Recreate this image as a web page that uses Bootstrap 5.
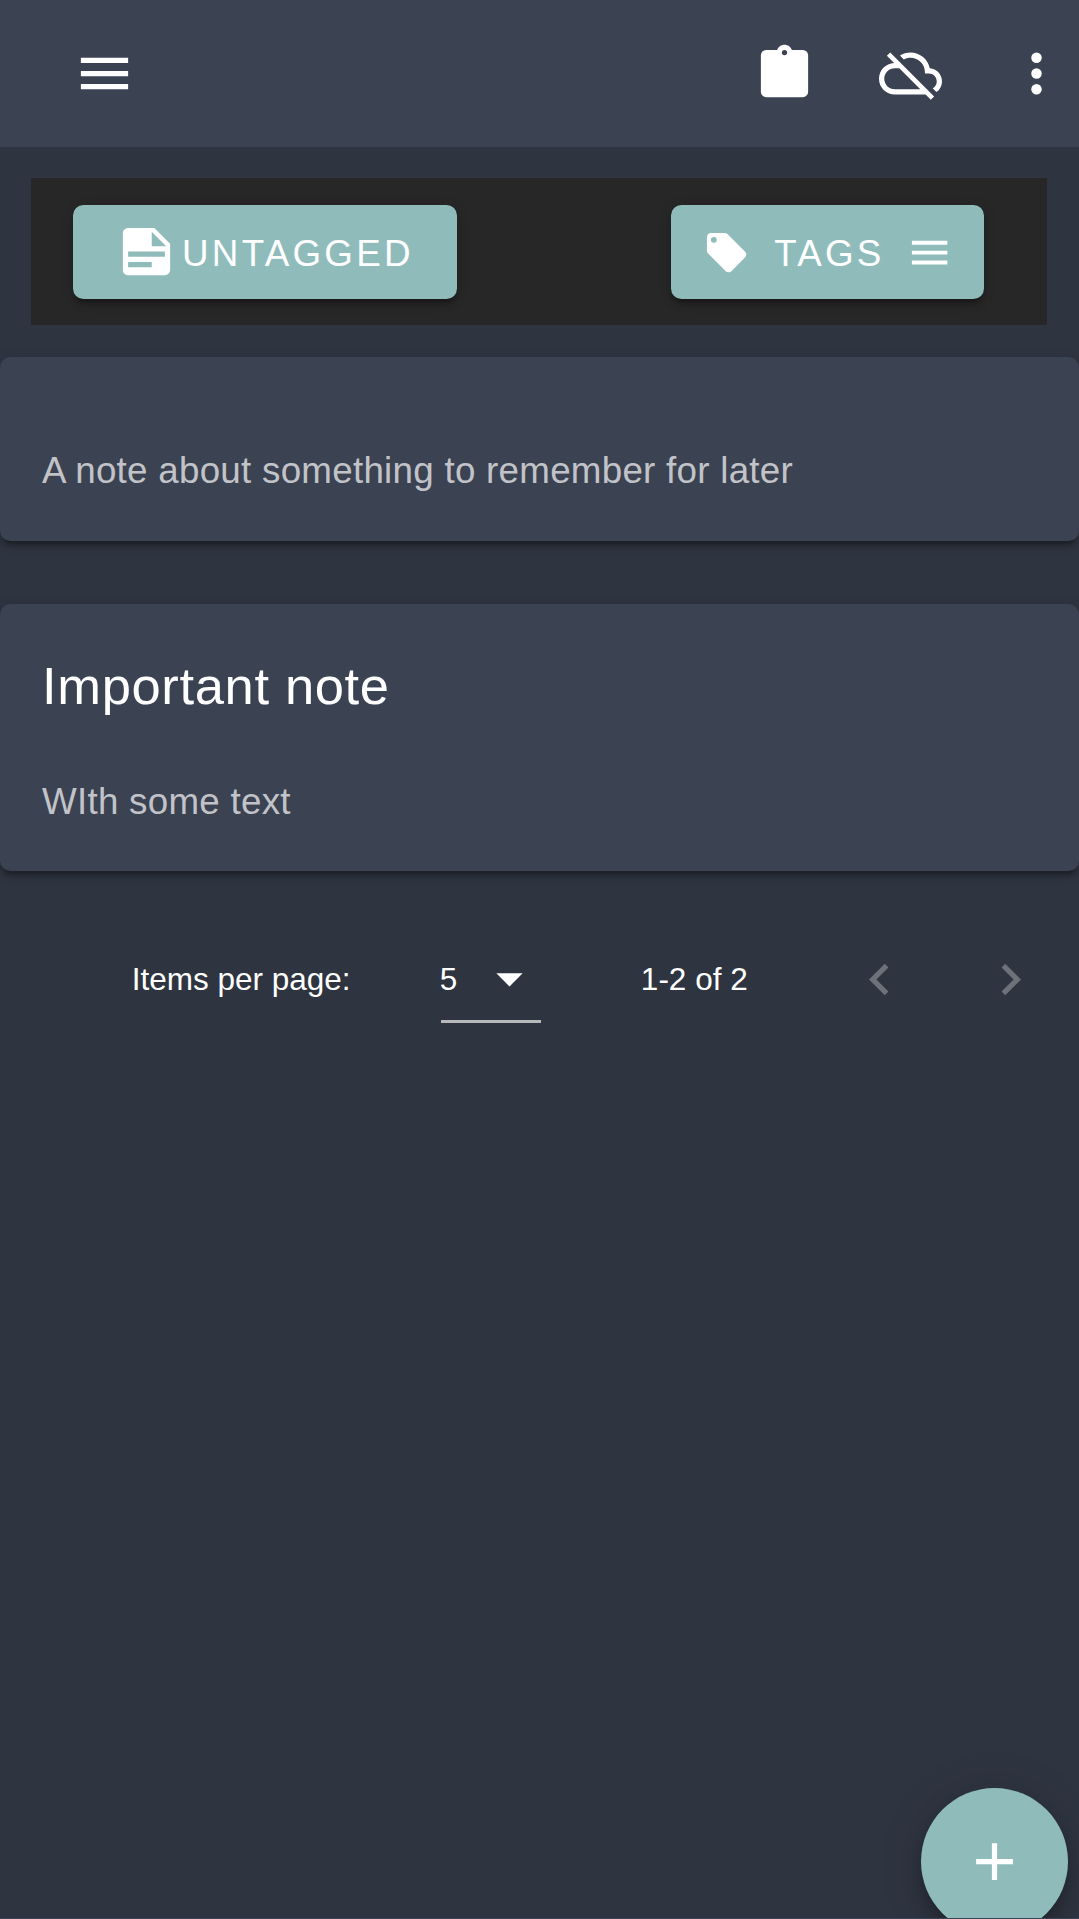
<!DOCTYPE html>
<html lang="en">
<head>
<meta charset="utf-8">
<meta name="viewport" content="width=device-width, initial-scale=1">
<title>Notes</title>
<link href="https://cdn.jsdelivr.net/npm/bootstrap@5.3.0/dist/css/bootstrap.min.css" rel="stylesheet">
<style>
:root { --u: 2.625px; --night: #2e3440; --surface: #3b4252; --accent: #8fbcbb; }
html, body { height: 100%; overflow: hidden; }
body { background: var(--night); color: #fff; font-family: "Liberation Sans", Arial, sans-serif; line-height: 1.5; }
svg { display: block; fill: currentColor; flex: none; }
.ic { width: calc(24 * var(--u)); height: calc(24 * var(--u)); }
.ic-sm { width: calc(18 * var(--u)); height: calc(18 * var(--u)); }
.icon-btn { color: inherit; background: none; border: 0; padding: 0; }
.app-bar { height: calc(56 * var(--u)); background: var(--surface); padding: 0 10.6px 0 73.4px; }
.app-actions { gap: 63px; }
.filter-bar { height: calc(56 * var(--u)); margin: 31.4px 31.6px 0 31.4px; background: #272727; padding: 0 63px 0 42px; }
.btn-accent { --bs-btn-color: #fff; --bs-btn-bg: var(--accent); --bs-btn-hover-bg: #83b1b0; --bs-btn-hover-color: #fff;
  height: calc(36 * var(--u)); padding: 0 42px; border: 0; border-radius: 10.5px; font-size: 36.75px; line-height: 1;
  letter-spacing: .0892857em;
  box-shadow: 0 7.9px 2.6px -5.25px rgba(0,0,0,.2), 0 5.25px 5.25px 0 rgba(0,0,0,.14), 0 2.6px 13px 0 rgba(0,0,0,.12); }
.btn-accent span { padding-top: 4px; }
.btn-untagged span { margin-left: 3.6px; margin-right: 1px; }
.btn-untagged svg { margin-bottom: 1px; }
.ic-start { margin-left: -10.5px; margin-right: 24px; margin-top: 1px; }
.ic-end { margin-right: -10.5px; margin-left: 21px; margin-top: 1px; }
.note-list { padding-top: 31.6px; gap: 63px; }
.note { --bs-card-bg: var(--surface); --bs-card-border-width: 0; --bs-card-border-radius: 10.5px; color: #fff; padding: 42px;
  box-shadow: 0 7.9px 2.6px -5.25px rgba(0,0,0,.2), 0 5.25px 5.25px 0 rgba(0,0,0,.14), 0 2.6px 13px 0 rgba(0,0,0,.12); }
.note-title { font-size: 52.5px; line-height: 80px; letter-spacing: .0125em; font-weight: 400; margin: 0 0 46px; }
.note-title:empty { margin: 0; height: 42px; }
.note-text { font-size: 36.75px; line-height: 59.75px; letter-spacing: .0071429em; color: rgba(255,255,255,.7); margin: 0 0 -2px; }
.pager { margin-top: 63px; height: 90px; padding: 0 37px 0 131.7px; font-size: 31.5px; line-height: 1; }
.page-size { width: 100px; height: 88px; margin-left: 90.3px; border-bottom: 3px solid rgba(255,255,255,.65); }
.page-size span { margin-left: -1px; padding-top: 3px; }
.page-size svg { margin-top: 1.5px; }
.page-range { margin-left: 100px; }
.page-nav { gap: 68px; color: rgba(255,255,255,.3); }
.fab { width: calc(56 * var(--u)); height: calc(56 * var(--u)); right: 10.8px; top: 1787.6px; background: var(--accent); color: #fff;
  box-shadow: 0 7.9px 13px -2.6px rgba(0,0,0,.2), 0 15.75px 26.25px 0 rgba(0,0,0,.14), 0 2.6px 47px 0 rgba(0,0,0,.12); }
.bottom-line { height: 1px; background: var(--surface); }
</style>
<script src="https://cdn.jsdelivr.net/npm/bootstrap@5.3.0/dist/js/bootstrap.bundle.min.js"></script>
</head>
<body>
<header class="app-bar d-flex align-items-center justify-content-between">
  <button class="icon-btn" aria-label="Menu"><svg class="ic" viewBox="0 0 24 24"><path d="M3,6H21V8H3V6M3,11H21V13H3V11M3,16H21V18H3V16Z"/></svg></button>
  <div class="app-actions d-flex">
    <button class="icon-btn" aria-label="Clipboard"><svg class="ic" viewBox="0 0 24 24"><path d="M19,3H14.82C14.4,1.84 13.3,1 12,1C10.7,1 9.6,1.84 9.18,3H5A2,2 0 0,0 3,5V19A2,2 0 0,0 5,21H19A2,2 0 0,0 21,19V5A2,2 0 0,0 19,3M12,3A1,1 0 0,1 13,4A1,1 0 0,1 12,5A1,1 0 0,1 11,4A1,1 0 0,1 12,3Z"/></svg></button>
    <button class="icon-btn" aria-label="Offline"><svg class="ic" viewBox="0 0 24 24"><path d="M19.35 10.04C18.67 6.59 15.64 4 12 4c-1.48 0-2.85.43-4.01 1.17l1.46 1.46C10.21 6.23 11.08 6 12 6c3.04 0 5.5 2.46 5.5 5.5v.5H19c1.66 0 3 1.34 3 3 0 1.13-.64 2.11-1.56 2.62l1.45 1.45C23.16 18.16 24 16.68 24 15c0-2.64-2.05-4.78-4.65-4.96zM3 5.27l2.75 2.74C2.56 8.15 0 10.77 0 14c0 3.31 2.69 6 6 6h11.73l2 2L21 20.73 4.27 4 3 5.27zM7.73 10l8 8H6c-2.21 0-4-1.79-4-4s1.79-4 4-4h1.73z"/></svg></button>
    <button class="icon-btn" aria-label="More"><svg class="ic" viewBox="0 0 24 24"><circle cx="12" cy="6" r="2"/><circle cx="12" cy="12" r="2"/><circle cx="12" cy="18" r="2"/></svg></button>
  </div>
</header>

<main>
  <div class="filter-bar d-flex align-items-center justify-content-between">
    <button class="btn btn-accent btn-untagged d-flex align-items-center">
      <svg class="ic" viewBox="0 0 24 24"><path d="M14,10H19.5L14,4.5V10M5,3H15L21,9V19A2,2 0 0,1 19,21H5C3.89,21 3,20.1 3,19V5C3,3.89 3.89,3 5,3M5,12V14H19V12H5M5,16V18H14V16H5Z"/></svg>
      <span>UNTAGGED</span>
    </button>
    <button class="btn btn-accent d-flex align-items-center">
      <svg class="ic-sm ic-start" viewBox="0 0 24 24"><path d="M5.5,7A1.5,1.5 0 0,1 4,5.5A1.5,1.5 0 0,1 5.5,4A1.5,1.5 0 0,1 7,5.5A1.5,1.5 0 0,1 5.5,7M21.41,11.58L12.41,2.58C12.05,2.22 11.55,2 11,2H4C2.89,2 2,2.89 2,4V11C2,11.55 2.22,12.05 2.59,12.41L11.58,21.41C11.95,21.77 12.45,22 13,22C13.55,22 14.05,21.77 14.41,21.41L21.41,14.41C21.78,14.05 22,13.55 22,13C22,12.44 21.77,11.94 21.41,11.58Z"/></svg>
      <span>TAGS</span>
      <svg class="ic-sm ic-end" viewBox="0 0 24 24"><path d="M3,6H21V8H3V6M3,11H21V13H3V11M3,16H21V18H3V16Z"/></svg>
    </button>
  </div>

  <div class="note-list d-flex flex-column">
    <article class="card note">
      <h2 class="note-title"></h2>
      <p class="note-text">A note about something to remember for later</p>
    </article>
    <article class="card note">
      <h2 class="note-title">Important note</h2>
      <p class="note-text">WIth some text</p>
    </article>
  </div>

  <div class="pager d-flex align-items-center">
    <span>Items per page:</span>
    <div class="page-size d-flex align-items-center justify-content-between">
      <span>5</span>
      <svg class="ic" viewBox="0 0 24 24"><path d="M7,10L12,15L17,10H7Z"/></svg>
    </div>
    <span class="page-range">1-2 of 2</span>
    <div class="page-nav d-flex ms-auto">
      <svg class="ic" viewBox="0 0 24 24"><path d="M15.41,16.58L10.83,12L15.41,7.41L14,6L8,12L14,18L15.41,16.58Z"/></svg>
      <svg class="ic" viewBox="0 0 24 24"><path d="M8.59,16.58L13.17,12L8.59,7.41L10,6L16,12L10,18L8.59,16.58Z"/></svg>
    </div>
  </div>
</main>

<button class="fab icon-btn rounded-circle position-fixed d-flex align-items-center justify-content-center" aria-label="Add note">
  <svg class="ic" viewBox="0 0 24 24"><path d="M19,13H13V19H11V13H5V11H11V5H13V11H19V13Z"/></svg>
</button>
<div class="bottom-line fixed-bottom"></div>
</body>
</html>
